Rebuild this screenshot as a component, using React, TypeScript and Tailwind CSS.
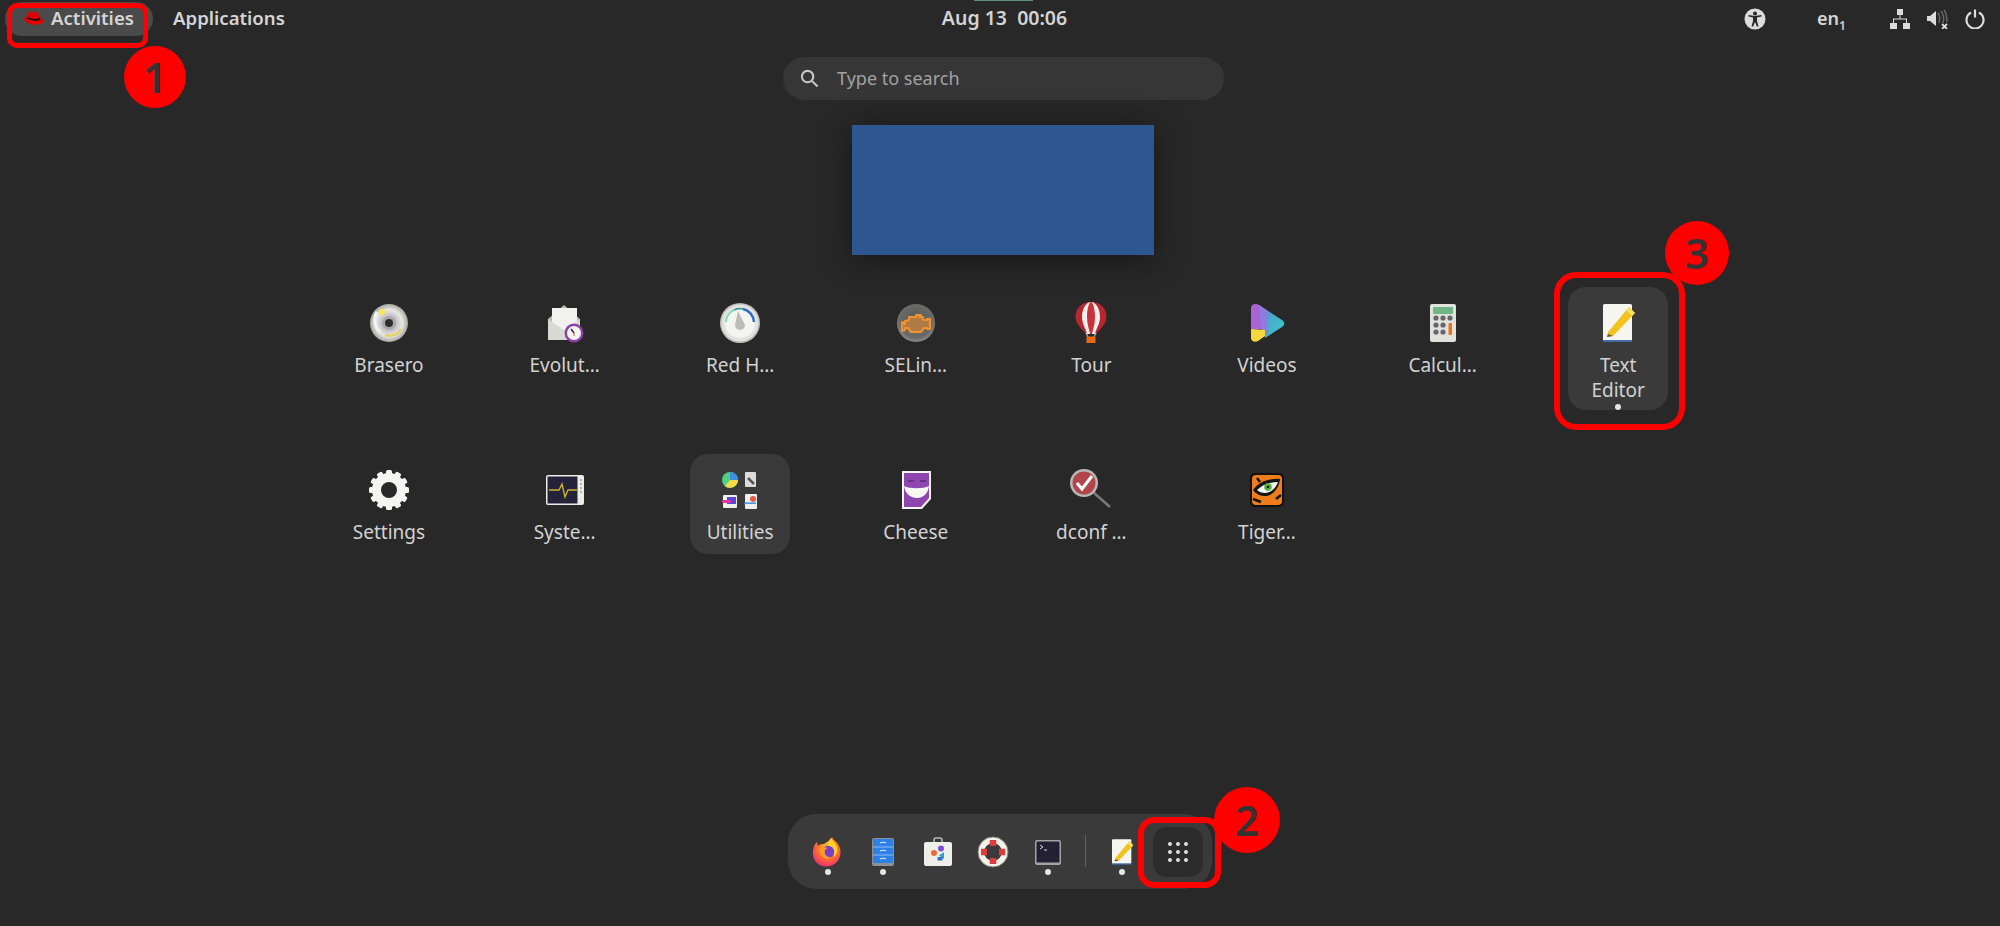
const apps = [
  { name: "Brasero", icon: <BraseroIcon /> },
  { name: "Evolut…", icon: <EvolutionIcon /> },
  { name: "Red H…", icon: <GaugeIcon /> },
  { name: "SELin…", icon: <SelinuxIcon /> },
  { name: "Tour", icon: <TourIcon /> },
  { name: "Videos", icon: <VideosIcon /> },
  { name: "Calcul…", icon: <CalculatorIcon /> },
  { name: "Text Editor", icon: <EditorIcon />, running: true, active: true },
  { name: "Settings", icon: <GearIcon /> },
  { name: "Syste…", icon: <MonitorIcon /> },
  { name: "Utilities", icon: <UtilitiesIcon />, active: true },
  { name: "Cheese", icon: <CheeseIcon /> },
  { name: "dconf …", icon: <DconfIcon /> },
  { name: "Tiger…", icon: <TigerIcon /> },
];

const dockApps = [
  { name: "firefox", icon: <FirefoxIcon />, running: true },
  { name: "files", icon: <FilesIcon />, running: true },
  { name: "software", icon: <SoftwareIcon />, running: false },
  { name: "help", icon: <HelpIcon />, running: false },
  { name: "terminal", icon: <TerminalIcon />, running: true },
];

function BraseroIcon() {
  return (
    <svg viewBox="0 0 48 48" className="h-12 w-12">
      <defs>
        <radialGradient id="disc" cx="50%" cy="50%" r="50%">
          <stop offset="0.3" stopColor="#b9b6c4" />
          <stop offset="0.7" stopColor="#e9e8e2" />
          <stop offset="1" stopColor="#a5a5a0" />
        </radialGradient>
      </defs>
      <circle cx="24" cy="24" r="19" fill="url(#disc)" />
      <path d="M12 13a16 16 0 0 0 3 20" fill="none" stroke="#f4f4f0" strokeWidth="3" />
      <path d="M20 36c6 2 12 0 16-6" fill="none" stroke="#e6d24a" strokeWidth="2" />
      <circle cx="17" cy="13" r="3" fill="#f6e94e" />
      <circle cx="24" cy="24" r="7" fill="#a8a8a8" />
      <circle cx="24" cy="24" r="4" fill="#2d2d2d" />
    </svg>
  );
}

function EvolutionIcon() {
  return (
    <svg viewBox="0 0 48 48" className="h-12 w-12">
      <path d="M7 20 23 6l16 14v21H7z" fill="#b9b9b4" />
      <path d="M11 9h25v22H11z" fill="#f1f1ed" />
      <path d="M7 20l17 12 15-12v21H7z" fill="#d9d9d4" />
      <circle cx="33" cy="34" r="9.5" fill="#8e3fa6" />
      <circle cx="33" cy="34" r="7" fill="#f7f5f2" />
      <path d="M30 30l3 4" stroke="#333" strokeWidth="1.5" />
      <path d="M33 34v3" stroke="#d5534a" strokeWidth="1" />
    </svg>
  );
}

function GaugeIcon() {
  return (
    <svg viewBox="0 0 48 48" className="h-12 w-12">
      <circle cx="24" cy="24" r="20" fill="#bdbdb9" />
      <circle cx="24" cy="24" r="18.5" fill="#e2e2de" />
      <circle cx="24" cy="24" r="15" fill="#f4f4f0" />
      <path d="M10 23a14 14 0 0 1 8-12" fill="none" stroke="#6fdcae" strokeWidth="1.6" />
      <path d="M18 11a14 14 0 0 1 9-1" fill="none" stroke="#3a9a9a" strokeWidth="1.6" />
      <path d="M27 10a14 14 0 0 1 11 13" fill="none" stroke="#2a6fc0" strokeWidth="2.4" />
      <path d="M22 12l-3 14a5 5 0 0 0 10 0z" fill="#bcbcb9" />
    </svg>
  );
}

function SelinuxIcon() {
  return (
    <svg viewBox="0 0 48 48" className="h-12 w-12">
      <defs>
        <radialGradient id="seBg" cx="50%" cy="45%" r="55%">
          <stop offset="0" stopColor="#555553" />
          <stop offset="0.8" stopColor="#6a6a68" />
          <stop offset="1" stopColor="#8c8c8a" />
        </radialGradient>
      </defs>
      <circle cx="24" cy="24" r="19" fill="url(#seBg)" />
      <path
        d="M10 23l3 2v-3l4-1v-3h7v-2h5l-2 2h4v3h4v-1h3v10h-3v-1h-3l-3 4H19l-3-4h-3v2l-3 1z"
        fill="#b07a45"
        stroke="#f09232"
        strokeWidth="2.2"
        strokeLinejoin="round"
      />
    </svg>
  );
}

function TourIcon() {
  return (
    <svg viewBox="0 0 48 48" className="h-12 w-12">
      <path d="M24 3C15 3 8.5 9 8.5 18c0 7 6.5 12 10.500 17h10c4-5 10.500-10 10.500-17 0-9-6.500-15-15.500-15z" fill="#b8262f" />
      <path d="M24 3c-5 0-9 7-9 15 0 7 4 12 5 17h8c1-5 5-10 5-17 0-8-4-15-9-15z" fill="#f3efec" />
      <path d="M24 3c-2 0-4 7-4 15 0 7 2 12 3 17h2c1-5 3-10 3-17 0-8-2-15-4-15z" fill="#c9343c" />
      <path d="M19 34l2 4M29 34l-2 4" stroke="#d8d8d8" strokeWidth="1" />
      <rect x="19.5" y="37.5" width="9" height="6.5" fill="#e86a10" />
    </svg>
  );
}

function VideosIcon() {
  return (
    <svg viewBox="0 0 48 48" className="h-12 w-12">
      <defs>
        <linearGradient id="vidRight" x1="0" y1="0" x2="1" y2="1">
          <stop offset="0" stopColor="#5a8fd8" />
          <stop offset="1" stopColor="#35d0c0" />
        </linearGradient>
      </defs>
      <path d="M8 9c0-4 5-5 8-3l3 2v22l-11 1z" fill="#a963d6" />
      <path d="M19 8l20 13c3 2 3 5 0 7L22 39z" fill="url(#vidRight)" />
      <path d="M16 6l6 4c2 1 3 3 3 5v19l-6 5z" fill="#8d7ddc" />
      <path d="M8 30l14 1v6l-7 5c-3 2-7 0-7-3z" fill="#f4d83e" />
    </svg>
  );
}

function CalculatorIcon() {
  const keys = [
    [17, 19], [24, 19], [31, 19],
    [17, 26], [24, 26],
    [17, 33], [24, 33],
  ];
  return (
    <svg viewBox="0 0 48 48" className="h-12 w-12">
      <rect x="11" y="5" width="26" height="38" rx="2" fill="#e2e2dc" />
      <rect x="14" y="8" width="20" height="7" rx="1" fill="#6fb586" />
      {keys.map(([x, y]) => (
        <circle key={`${x}-${y}`} cx={x} cy={y} r="2.6" fill="#66666c" />
      ))}
      <rect x="29.5" y="24" width="3.5" height="12" rx="1" fill="#e8741a" />
    </svg>
  );
}

function EditorIcon({ size = "h-12 w-12" }: { size?: string }) {
  return (
    <svg viewBox="0 0 48 48" className={size}>
      <rect x="9" y="5" width="29" height="37" rx="1.5" fill="#f6f5f0" />
      <rect x="9" y="41" width="29" height="2" fill="#3f6ea8" />
      <path d="M14 33 35 8l6 6-22 23-6 1z" fill="#f2c21f" />
      <path d="M35 8l6 6-3 3-6-6z" fill="#f7dd6a" />
      <path d="M14 35l5 2-6 1z" fill="#555" />
    </svg>
  );
}

function GearIcon() {
  const teeth = [0, 30, 60, 90, 120, 150, 180, 210, 240, 270, 300, 330];
  return (
    <svg viewBox="0 0 48 48" className="h-12 w-12">
      {teeth.map((angle) => (
        <rect key={angle} x="21" y="4" width="6" height="8" rx="1.5" fill="#f4f4f1" transform={`rotate(${angle} 24 24)`} />
      ))}
      <circle cx="24" cy="24" r="12.5" fill="none" stroke="#f4f4f1" strokeWidth="9" />
    </svg>
  );
}

function MonitorIcon() {
  return (
    <svg viewBox="0 0 48 48" className="h-12 w-12">
      <rect x="5" y="9" width="38" height="30" rx="2" fill="#ecebe6" />
      <rect x="6.5" y="10.5" width="30" height="27" fill="#24233a" />
      <path d="M8 24h10l3-6 3 13 3-7h9" fill="none" stroke="#cdb02d" strokeWidth="1.4" />
      <path d="M40 13v14" stroke="#b5b5b0" strokeWidth="2" strokeDasharray="2 2" />
    </svg>
  );
}

function UtilitiesIcon() {
  return (
    <svg viewBox="0 0 48 48" className="h-12 w-12">
      <circle cx="14" cy="14" r="8" fill="#4fcf82" />
      <path d="M14 14V6a8 8 0 0 1 8 8z" fill="#3f8fe0" />
      <path d="M14 14h8a8 8 0 0 1-13 6z" fill="#f2dc4a" />
      <rect x="29" y="6" width="11" height="15" rx="1" fill="#dcdcd8" />
      <path d="M32 12l6 6" stroke="#555" strokeWidth="2.5" />
      <rect x="7" y="29" width="14" height="13" rx="1" fill="#f0efea" />
      <rect x="11" y="31" width="9" height="7" fill="#5a45d8" />
      <rect x="6" y="34" width="9" height="3" rx="1" fill="#e2399a" />
      <rect x="29" y="28" width="12" height="15" rx="1" fill="#efefea" />
      <circle cx="37" cy="33" r="3" fill="#e85a50" />
      <path d="M28 38c3-2 6 0 12-1" fill="none" stroke="#3f8fe0" strokeWidth="1.5" />
    </svg>
  );
}

function CheeseIcon() {
  return (
    <svg viewBox="0 0 48 48" className="h-12 w-12">
      <path d="M10 5h29v28l-9 10H10z" fill="#f7f6f3" />
      <path d="M12 7h25v25l-8 9H12z" fill="#8e45ae" />
      <path d="M12 20c6 3 19 3 25 0-1 8-6 12-12 12s-12-4-13-12z" fill="#f7f6f3" />
      <path d="M16 15h6M28 15h6" stroke="#5e2a78" strokeWidth="1.3" />
    </svg>
  );
}

function DconfIcon() {
  return (
    <svg viewBox="0 0 48 48" className="h-12 w-12">
      <path d="M26 26 43 41" stroke="#7a7a7a" strokeWidth="2.5" />
      <circle cx="17" cy="17" r="14" fill="#b8b8b8" />
      <circle cx="17" cy="17" r="11.5" fill="#b2444c" />
      <path d="M10 17l5 6 10-13" fill="none" stroke="#fff" strokeWidth="3" />
    </svg>
  );
}

function TigerIcon() {
  return (
    <svg viewBox="0 0 48 48" className="h-12 w-12">
      <rect x="7" y="7" width="34" height="34" rx="5" fill="#111" />
      <rect x="9" y="9" width="30" height="30" rx="4" fill="#ef7d1c" />
      <path d="M10 24c5-8 16-12 27-11-1 10-8 17-15 17-5 0-9-2-12-6z" fill="#151515" />
      <path d="M14 24c5-5 12-8 21-8-2 6-7 11-13 11-3 0-6-1-8-3z" fill="#f5f5f2" />
      <circle cx="25" cy="21" r="3.8" fill="#55b23a" />
      <circle cx="25" cy="21" r="1.3" fill="#122" />
      <path d="M10 33l8 3M14 12l3 4M33 33l5-4" stroke="#151515" strokeWidth="2.5" />
    </svg>
  );
}

function FirefoxIcon() {
  return (
    <svg viewBox="0 0 32 32" className="h-8 w-8">
      <defs>
        <radialGradient id="ffBody" cx="55%" cy="35%" r="70%">
          <stop offset="0" stopColor="#ffcc2e" />
          <stop offset="0.5" stopColor="#ff7a22" />
          <stop offset="1" stopColor="#f0257a" />
        </radialGradient>
      </defs>
      <path d="M20 1c1 3 4 4 6 7 4 6 3 13-1 18-6 6-16 6-21 0C0 21 0 14 3 8l2-2 1 4c2-2 4-2 6-2 2-2 6-3 8-7z" fill="url(#ffBody)" />
      <path d="M19 2c1 3 5 5 6 9 1 5-1 8-3 10 1-6-2-10-6-11 0-3 1-6 3-8z" fill="#ffd22e" />
      <circle cx="16" cy="16" r="6.2" fill="#7a3fc8" />
      <path d="M8 13c2-2 5-2 8-1-3 1-4 3-3 6 1 2 4 4 7 3-3 3-9 2-11-2-1-2-2-4-1-6z" fill="#ff9a2a" />
    </svg>
  );
}

function FilesIcon() {
  return (
    <svg viewBox="0 0 32 32" className="h-8 w-8">
      <rect x="5" y="2" width="22" height="28" rx="2" fill="#8d9097" />
      <rect x="6" y="3" width="20" height="24" rx="1" fill="#2f80e4" />
      <path d="M6 11h20M6 19h20" stroke="#a9c9f2" strokeWidth="0.8" />
      <path d="M13 7c2-1 4-1 6 0M13 15c2-1 4-1 6 0M13 23c2-1 4-1 6 0" fill="none" stroke="#dce9fa" strokeWidth="1.2" />
    </svg>
  );
}

function SoftwareIcon() {
  return (
    <svg viewBox="0 0 32 32" className="h-8 w-8">
      <path d="M12 7V4c0-1 1-2 2-2h4c1 0 2 1 2 2v3" fill="none" stroke="#b9b9b4" strokeWidth="1.6" />
      <rect x="2" y="6" width="28" height="24" rx="2" fill="#efefea" />
      <circle cx="12" cy="17" r="3" fill="#ef6a30" />
      <circle cx="19" cy="12.5" r="3" fill="#7a50d8" />
      <path d="M22 16v7l-5-3.5z" fill="#2aa0c8" />
      <rect x="15.5" y="21" width="5" height="3.5" fill="#2b6fd0" />
    </svg>
  );
}

function HelpIcon() {
  return (
    <svg viewBox="0 0 32 32" className="h-8 w-8">
      <circle cx="16" cy="16" r="12" fill="none" stroke="#f3f1ec" strokeWidth="6" />
      <path d="M16 4v6M16 22v6M4 16h6M22 16h6" stroke="#de3c3c" strokeWidth="6.5" />
      <circle cx="16" cy="16" r="15" fill="none" stroke="#8f8478" strokeWidth="1" />
    </svg>
  );
}

function TerminalIcon() {
  return (
    <svg viewBox="0 0 32 32" className="h-8 w-8">
      <rect x="3" y="4" width="26" height="25" rx="2" fill="#a3a3a6" />
      <rect x="4.5" y="5.5" width="23" height="21" rx="1" fill="#232034" />
      <path d="M8 9l3 2-3 2" fill="none" stroke="#d8d8d8" strokeWidth="1" />
      <path d="M12 14h3" stroke="#d8d8d8" strokeWidth="1" />
    </svg>
  );
}

function RunningDot() {
  return <span className="block h-[6px] w-[6px] rounded-full bg-[#e6e6e6]" />;
}

function AppTile({ name, icon, running, active }: { name: string; icon: React.ReactNode; running?: boolean; active?: boolean }) {
  return (
    <div className={`flex w-[100px] flex-col items-center rounded-[18px] pt-3 ${active ? "bg-[#3a3a3a]" : ""} ${running ? "" : "pb-[9px]"}`}>
      {icon}
      <div className="mt-[6px] w-[84px] text-center text-[19px] leading-[25px] text-[#d2d2d2]">{name}</div>
      {running && (
        <div className="mt-px">
          <RunningDot />
        </div>
      )}
    </div>
  );
}

function Badge({ className, value }: { className: string; value: string }) {
  return (
    <div className={`absolute flex items-center justify-center rounded-full bg-[#fe0000] text-[42px] font-semibold leading-none text-[#333333] ${className}`}>
      {value}
    </div>
  );
}

export default function App() {
  return (
    <div className="relative flex h-[926px] w-full flex-col overflow-hidden bg-[#282828] font-['Noto_Sans',sans-serif]">
      <div className="absolute left-[974px] top-0 h-px w-[59px] bg-[#5f8f7d]" />

      {/* top bar */}
      <header className="grid h-[38px] shrink-0 grid-cols-[1fr_auto_1fr] items-center text-[18.6px] font-semibold text-[#d4d4d4]">
        <div className="flex items-center pl-[5px]">
          <div className="flex h-[34px] w-[148px] items-center rounded-full bg-[#4a4a4a] pb-[2px] pl-[18px]">
            <svg viewBox="0 0 24 18" className="h-[17px] w-[21px]">
              <path d="M1 9c0 3 6 7 13 7 5 0 9-1 9-4 0-2-2-3-4-4-1-3-2-7-4-7-1 0-2 1-3 1-2 0-3-1-4-1-2 0-3 3-3 6-2 0-4 1-4 2z" fill="#e00000" />
              <path d="M5 7c3 2 9 4 14 1l1 2c-5 3-12 1-16-1z" fill="#1a0a0a" />
            </svg>
            <span className="ml-[7px]">Activities</span>
          </div>
          <span className="ml-[20px] pb-[2px]">Applications</span>
        </div>
        <div className="whitespace-pre pb-[2px] pl-[9px] text-[19.5px]">Aug 13  00:06</div>
        <div className="flex items-center justify-end pr-[15px]">
          <svg viewBox="0 0 22 22" className="h-[22px] w-[22px]">
            <circle cx="11" cy="11" r="10.5" fill="#dcdcdc" />
            <circle cx="11" cy="5.5" r="2" fill="#282828" />
            <path d="M4.5 8.5 9 9.5v3.5L7.5 18.5h1.6L11 14l1.9 4.5h1.6L13 13V9.5l4.5-1V7L11 8 4.5 7z" fill="#282828" />
          </svg>
          <div className="ml-[51px] w-[28px] pb-[2px] text-[18px]">
            en<span className="relative top-[5px] text-[12px]">1</span>
          </div>
          <svg viewBox="0 0 20 20" className="ml-[45px] h-[20px] w-[20px]" fill="#dcdcdc">
            <rect x="7" y="0" width="6" height="6" />
            <rect x="0" y="14" width="7" height="6" />
            <rect x="13" y="14" width="7" height="6" />
            <path d="M9.5 6h1v3.5H17V14h-1v-3.5H4V14H3V9.5h6.5z" />
          </svg>
          <svg viewBox="0 0 22 20" className="ml-[17px] h-[20px] w-[22px]">
            <path d="M0 7h3l6-5v15l-6-5H0z" fill="#dcdcdc" />
            <path d="M11 4c2 3 2 7 1 10M14 2c3 4 3 9 2 12M17 1c3 4 3 9 3 12" fill="none" stroke="#6a6a6a" strokeWidth="1.4" />
            <path d="M15 15l5 5M20 15l-5 5" stroke="#dcdcdc" strokeWidth="1.8" />
          </svg>
          <svg viewBox="0 0 20 20" className="ml-[16px] h-[20px] w-[20px]" fill="none" stroke="#dcdcdc" strokeWidth="2.2">
            <path d="M6 3.5a8.5 8.5 0 1 0 8 0" />
            <path d="M10 0.5v8" />
          </svg>
        </div>
      </header>

      {/* search */}
      <div className="ml-[7px] mt-[19px] flex h-[43px] w-[441px] shrink-0 items-center self-center rounded-full bg-[#363636] pl-[17px] text-[18px] text-[#a2a2a2]">
        <svg viewBox="0 0 20 20" className="h-[19px] w-[19px]" fill="none" stroke="#c8c8c8" strokeWidth="2.2">
          <circle cx="8" cy="8" r="6" />
          <path d="M12.5 12.5 18.5 18.5" />
        </svg>
        <span className="ml-[18px]">Type to search</span>
      </div>

      {/* workspace thumbnail */}
      <div className="ml-[5px] mt-[25px] h-[130px] w-[302px] shrink-0 self-center bg-[#2e5690] shadow-[0_4px_30px_rgba(0,0,0,0.45)]" />

      {/* app grid */}
      <div className="ml-[339px] mt-[32px] grid grid-cols-[repeat(8,100px)] grid-rows-[100px_100px] items-start gap-x-[75.6px] gap-y-[67px]">
        {apps.map((app) => (
          <AppTile key={app.name} name={app.name} icon={app.icon} running={app.running} active={app.active} />
        ))}
      </div>

      {/* dock */}
      <div className="mb-[37px] mt-auto flex h-[75px] w-[424px] shrink-0 items-start self-center rounded-[28px] bg-[#3a3a3a] pl-[12.5px] pt-[13px]">
        {dockApps.map((app) => (
          <div key={app.name} className="flex w-[55px] flex-col items-center gap-px pt-[9px]">
            {app.icon}
            {app.running && <RunningDot />}
          </div>
        ))}
        <div className="ml-[9.5px] mt-[8px] h-[32px] w-px bg-[#636363]" />
        <div className="ml-[8.5px] flex w-[55px] flex-col items-center gap-px pt-[9px]">
          <EditorIcon size="h-8 w-8" />
          <RunningDot />
        </div>
        <div className="ml-[3.5px] grid h-[50px] w-[50px] place-content-center rounded-[14px] bg-[#2c2c2c]">
          <div className="grid grid-cols-3 gap-[4px]">
            {[1, 2, 3, 4, 5, 6, 7, 8, 9].map((dot) => (
              <span key={dot} className="h-[4px] w-[4px] rounded-full bg-[#dedede]" />
            ))}
          </div>
        </div>
      </div>

      {/* red annotations */}
      <div className="absolute left-[7px] top-[3px] h-[45px] w-[141px] rounded-[10px] border-[5px] border-[#fe0000]" />
      <Badge className="left-[124px] top-[46px] h-[62px] w-[62px]" value="1" />
      <div className="absolute left-[1554px] top-[272px] h-[158px] w-[131px] rounded-[22px] border-[6px] border-[#fe0000]" />
      <Badge className="left-[1665px] top-[221px] h-[64px] w-[64px]" value="3" />
      <div className="absolute left-[1138px] top-[817px] h-[71px] w-[83px] rounded-[16px] border-[6px] border-[#fe0000]" />
      <Badge className="left-[1214px] top-[787px] h-[66px] w-[66px]" value="2" />
    </div>
  );
}
